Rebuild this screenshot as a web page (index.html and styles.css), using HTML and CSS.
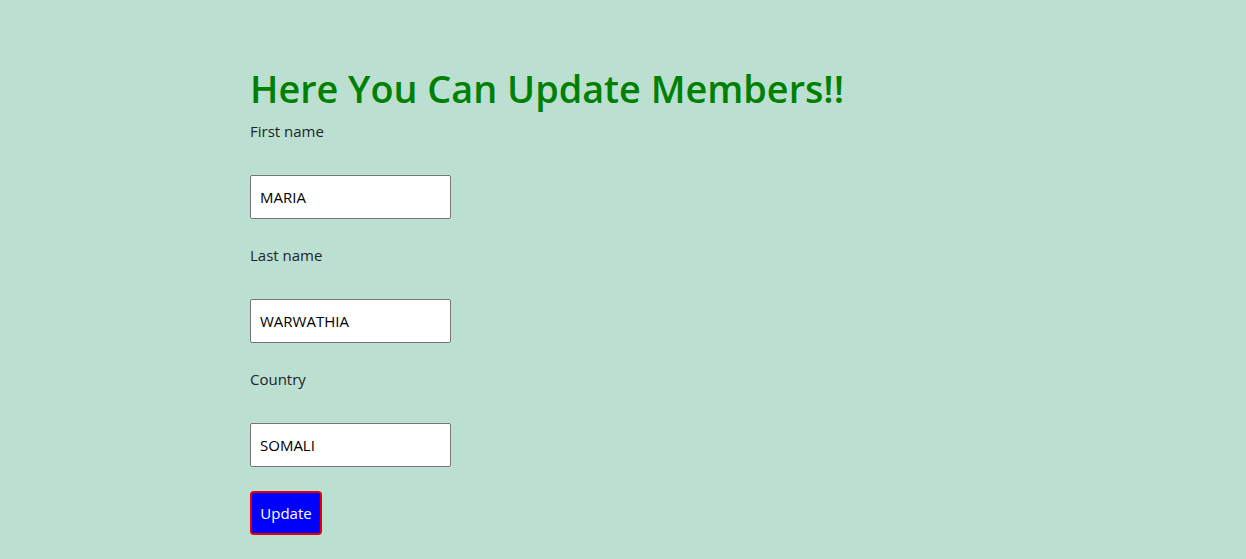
FILE: index.html
```html
<!DOCTYPE html>
<html>
<head>
<meta charset="utf-8">
<link rel="stylesheet" href="styles.css">
</head>
<body>
<div class="page">
  <h1 class="title">Here You Can Update Members!!</h1>
  <form class="form">
    <label class="label">First name</label>
    <input class="field" type="text" value="MARIA">
    <label class="label">Last name</label>
    <input class="field" type="text" value="WARWATHIA">
    <label class="label">Country</label>
    <input class="field" type="text" value="SOMALI">
    <button class="btn" type="button">Update</button>
  </form>
</div>
</body>
</html>
```
FILE: styles.css
```css
html, body {
  margin: 0;
  padding: 0;
  background: #bbdfd1;
  height: 100%;
}
body {
  font-family: "Open Sans", "Noto Sans", sans-serif;
  font-size: 15px;
  color: #212529;
}
.page {
  padding: 65px 0 0 250px;
}
.title {
  margin: 0 0 6px 0;
  font-size: 37.8px;
  font-weight: 600;
  line-height: 48px;
  color: #008000;
}
.form {
  display: flex;
  flex-direction: column;
  align-items: flex-start;
}
.label {
  line-height: 24px;
  height: 24px;
  margin-bottom: 32px;
}
.field {
  box-sizing: border-box;
  width: 201px;
  height: 44px;
  margin: 0 0 24px 0;
  padding: 0 9px;
  border: 1px solid #767676;
  border-radius: 2px;
  background: #fff;
  font-family: inherit;
  font-size: 15px;
  color: #000;
  outline: none;
}
.btn {
  box-sizing: border-box;
  width: 72px;
  height: 44px;
  padding: 0;
  border: 2px solid #e00000;
  border-radius: 4px;
  background: #0000ff;
  color: #fff;
  font-family: inherit;
  font-size: 15px;
}
```
